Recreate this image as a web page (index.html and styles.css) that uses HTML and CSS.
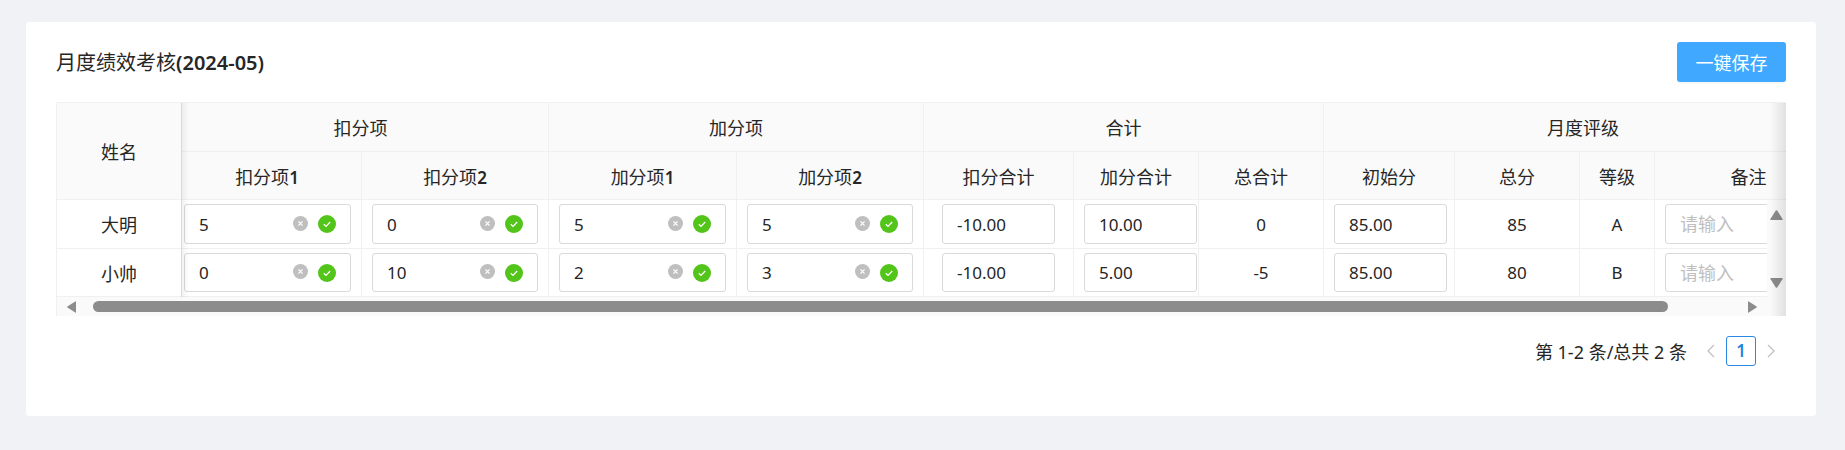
FILE: index.html
```html
<!DOCTYPE html>
<html lang="en">
<head>
    <meta charset="UTF-8">
    <title>月度绩效考核</title>
    <link rel="stylesheet" href="styles.css">
</head>
<body>
    <div class="card">
        <div class="card-head">
            <h1 class="title">月度绩效考核<span class="latin">(2024-05)</span></h1>
            <button class="save-btn">一键保存</button>
        </div>

        <div class="table-wrap">
            <div class="head-clip">
                <table class="grid">
                    <colgroup>
                        <col class="c-name"><col class="c-a"><col class="c-b"><col class="c-c"><col class="c-b">
                        <col class="c-d"><col class="c-e"><col class="c-e"><col class="c-f"><col class="c-e"><col class="c-g"><col class="c-h">
                    </colgroup>
                    <thead>
                        <tr class="row-a">
                            <th rowspan="2">姓名</th>
                            <th colspan="2" class="th-under">扣分项</th>
                            <th colspan="2">加分项</th>
                            <th colspan="3">合计</th>
                            <th colspan="4">月度评级</th>
                        </tr>
                        <tr class="row-b">
                            <th class="th-under">扣分项<span class="latin small">1</span></th>
                            <th>扣分项<span class="latin small">2</span></th>
                            <th>加分项<span class="latin small">1</span></th>
                            <th>加分项<span class="latin small">2</span></th>
                            <th>扣分合计</th>
                            <th>加分合计</th>
                            <th>总合计</th>
                            <th>初始分</th>
                            <th>总分</th>
                            <th>等级</th>
                            <th>备注</th>
                        </tr>
                    </thead>
                </table>
            </div>

            <div class="table-main">
                <div class="table-left">
                    <div class="body-clip">
                        <table class="grid">
                            <colgroup>
                                <col class="c-name"><col class="c-a"><col class="c-b"><col class="c-c"><col class="c-b">
                                <col class="c-d"><col class="c-e"><col class="c-e"><col class="c-f"><col class="c-e"><col class="c-g"><col class="c-h">
                            </colgroup>
                            <tbody id="rows"></tbody>
                        </table>
                    </div>
                    <div class="hbar">
                        <svg class="arrow-h" viewBox="0 0 9 12"><path d="M9 .8 V11.2 Q9 12 8.2 11.6 L.4 6.6 Q0 6 .4 5.4 L8.2 .4 Q9 0 9 .8Z"/></svg>
                        <div class="thumb"></div>
                        <svg class="arrow-h arrow-end" viewBox="0 0 9 12"><path d="M0 .8 V11.2 Q0 12 .8 11.6 L8.6 6.6 Q9 6 8.6 5.4 L.8 .4 Q0 0 0 .8Z"/></svg>
                    </div>
                </div>
                <div class="vbar">
                    <svg class="arrow-v" viewBox="0 0 13 10"><path d="M1 10 H12 Q13 10 12.6 9 L7.2 .6 Q6.5 0 5.8 .6 L.4 9 Q0 10 1 10Z"/></svg>
                    <svg class="arrow-v" viewBox="0 0 13 10"><path d="M1 0 H12 Q13 0 12.6 1 L7.2 9.4 Q6.5 10 5.8 9.4 L.4 1 Q0 0 1 0Z"/></svg>
                </div>
            </div>

            <div class="shadow-left"></div>
            <div class="shadow-right"></div>
        </div>

        <div class="pager">
            <span class="pager-total">第 1-2 条/总共 2 条</span>
            <span class="pager-nav">
                <svg viewBox="0 0 10 14"><path d="M8 1 L2 7 L8 13"/></svg>
            </span>
            <span class="pager-item">1</span>
            <span class="pager-nav">
                <svg viewBox="0 0 10 14"><path d="M2 1 L8 7 L2 13"/></svg>
            </span>
        </div>
    </div>

    <script>
        const people = [
            { name: '大明', scores: [5, 0, 5, 5], minus: '-10.00', plus: '10.00', sum: 0, base: '85.00', total: 85, level: 'A' },
            { name: '小帅', scores: [0, 10, 2, 3], minus: '-10.00', plus: '5.00', sum: -5, base: '85.00', total: 80, level: 'B' }
        ];

        const clearIcon = '<svg class="ico-clear" viewBox="0 0 16 16"><circle cx="8" cy="8" r="8"/><path d="M5.8 5.8 L10.2 10.2 M10.2 5.8 L5.8 10.2"/></svg>';
        const okIcon = '<svg class="ico-ok" viewBox="0 0 18 18"><circle cx="9" cy="9" r="9"/><path d="M5.8 9.2 L8 11.4 L12.2 7"/></svg>';

        function editCell(value, first) {
            return '<td class="' + (first ? 'td-edit td-first' : 'td-edit') + '"><div class="edit-box">' +
                '<input class="edit-input" value="' + value + '">' + clearIcon + okIcon + '</div></td>';
        }

        function shortCell(value, cls) {
            const attr = value === '' ? 'placeholder="请输入"' : 'value="' + value + '"';
            return '<td class="td-short ' + cls + '"><input class="short-input" ' + attr + '></td>';
        }

        const rows = document.getElementById('rows');
        people.forEach((p, i) => {
            const tr = document.createElement('tr');
            tr.className = i === 0 ? 'row-a' : 'row-b';
            tr.innerHTML = '<td>' + p.name + '</td>' +
                p.scores.map((s, j) => editCell(s, j === 0)).join('') +
                shortCell(p.minus, 'td-wide') +
                shortCell(p.plus, '') +
                '<td class="td-num">' + p.sum + '</td>' +
                shortCell(p.base, '') +
                '<td class="td-num">' + p.total + '</td>' +
                '<td class="td-num">' + p.level + '</td>' +
                shortCell('', 'td-note');
            rows.appendChild(tr);
        });
    </script>
</body>
</html>
```

FILE: styles.css
```css
* {
    margin: 0;
    padding: 0;
    box-sizing: border-box;
}

body {
    font-family: 'Noto Sans', 'Noto Sans CJK SC', sans-serif;
    font-size: 18px;
    color: #262626;
    background: #f0f2f5;
    height: 450px;
    padding: 22px 29px 0 26px;
    overflow: hidden;
}

.card {
    background: #fff;
    height: 394px;
    padding: 20px 30px 0 30px;
    border-radius: 3px;
}

.card-head {
    display: flex;
    justify-content: space-between;
    align-items: center;
    height: 40px;
    margin-bottom: 20px;
}

.title {
    font-size: 20px;
    font-weight: 400;
    line-height: 40px;
    padding-top: 2px;
}

.latin {
    font-weight: 600;
}

.small {
    font-size: 17px;
}

.save-btn {
    width: 109px;
    height: 40px;
    border: none;
    border-radius: 3px;
    background: #40a9ff;
    color: #fff;
    font: inherit;
    box-shadow: 0 2px 0 rgba(0, 0, 0, 0.03);
}

.table-wrap {
    position: relative;
    width: 1730px;
    border-top: 1px solid #f0f0f0;
    border-left: 1px solid #f0f0f0;
    overflow: hidden;
}

.head-clip {
    overflow: hidden;
    background: #fafafa;
}

.body-clip {
    overflow: hidden;
}

.table-main {
    display: flex;
}

.table-left {
    width: 1710px;
}

.grid {
    width: 1786px;
    table-layout: fixed;
    border-collapse: separate;
    border-spacing: 0;
}

.c-name { width: 125px; }
.c-a { width: 180px; }
.c-b { width: 187px; }
.c-c { width: 188px; }
.c-d { width: 150px; }
.c-e { width: 125px; }
.c-f { width: 131px; }
.c-g { width: 75px; }
.c-h { width: 188px; }

.grid th,
.grid td {
    text-align: center;
    font-weight: 400;
    border-right: 1px solid #f0f0f0;
    border-bottom: 1px solid #f0f0f0;
    white-space: nowrap;
    overflow: hidden;
}

.grid th {
    background: #fafafa;
}

/* this column is scrolled a little under the fixed one */
.grid .th-under {
    padding-right: 9px;
}

.grid .td-num {
    font-size: 17px;
}

.row-a { height: 49px; }
.row-b { height: 48px; }

.grid .td-edit,
.grid .td-short {
    text-align: left;
    padding-left: 10px;
}

.grid .td-edit {
    padding-right: 10px;
}

.grid .td-first {
    padding-left: 2px;
    padding-right: 10px;
}

.grid .td-wide {
    padding-left: 18px;
}

.edit-box {
    display: flex;
    align-items: center;
    height: 40px;
    padding: 0 14px;
    border: 1px solid #d9d9d9;
    border-radius: 3px;
}

.row-b .edit-box,
.row-b .short-input {
    height: 39px;
}

.edit-input {
    flex: 1;
    min-width: 0;
    border: none;
    outline: none;
    font: inherit;
    font-size: 17px;
    color: inherit;
    background: none;
}

.short-input {
    display: block;
    width: 113px;
    height: 40px;
    padding: 0 14px;
    border: 1px solid #d9d9d9;
    border-radius: 3px;
    outline: none;
    font: inherit;
    font-size: 17px;
    color: inherit;
}

.td-note .short-input {
    width: 166px;
    font-size: 18px;
}

.short-input::placeholder {
    color: #bfbfbf;
}

.ico-clear {
    width: 15px;
    height: 15px;
    margin: -2px 10px 0 0;
    flex: none;
    fill: #bfbfbf;
}

.ico-clear path {
    stroke: #fff;
    stroke-width: 1.3;
    fill: none;
}

.ico-ok {
    width: 18px;
    height: 18px;
    flex: none;
    fill: #52c41a;
}

.ico-ok path {
    stroke: #fff;
    stroke-width: 1.3;
    fill: none;
}

.hbar {
    display: flex;
    align-items: center;
    height: 19px;
    padding-left: 10px;
    background: #fafafa;
}

.arrow-h {
    width: 9px;
    height: 12px;
    fill: #8c8c8c;
    flex: none;
}

.thumb {
    width: 1575px;
    height: 11px;
    margin-left: 17px;
    border-radius: 6px;
    background: #8c8c8c;
}

.arrow-end {
    margin-left: 80px;
}

.vbar {
    width: 19px;
    display: flex;
    flex-direction: column;
    align-items: center;
    justify-content: space-between;
    padding: 10px 0 28px;
    background: #fafafa;
}

.arrow-v {
    width: 13px;
    height: 10px;
    fill: #8c8c8c;
}

.shadow-left {
    position: absolute;
    left: 124px;
    top: 0;
    bottom: 19px;
    width: 8px;
    border-left: 1px solid #d9d9d9;
    background: linear-gradient(90deg, rgba(0, 0, 0, 0.05), rgba(0, 0, 0, 0));
    pointer-events: none;
}

.shadow-right {
    position: absolute;
    right: 0;
    top: 0;
    bottom: 0;
    width: 16px;
    background: linear-gradient(90deg, rgba(0, 0, 0, 0), rgba(0, 0, 0, 0.1));
    pointer-events: none;
}

.pager {
    display: flex;
    justify-content: flex-end;
    align-items: center;
    height: 30px;
    margin-top: 20px;
}

.pager-total {
    margin-right: 9px;
}

.pager-nav {
    width: 30px;
    display: flex;
    justify-content: center;
}

.pager-nav svg {
    width: 10px;
    height: 14px;
    fill: none;
    stroke: #bfbfbf;
    stroke-width: 1.2;
}

.pager-item {
    width: 30px;
    height: 30px;
    line-height: 28px;
    text-align: center;
    font-size: 17px;
    border: 1px solid #2a88e0;
    border-radius: 3px;
    color: #1f85e0;
    font-weight: 600;
}
```
